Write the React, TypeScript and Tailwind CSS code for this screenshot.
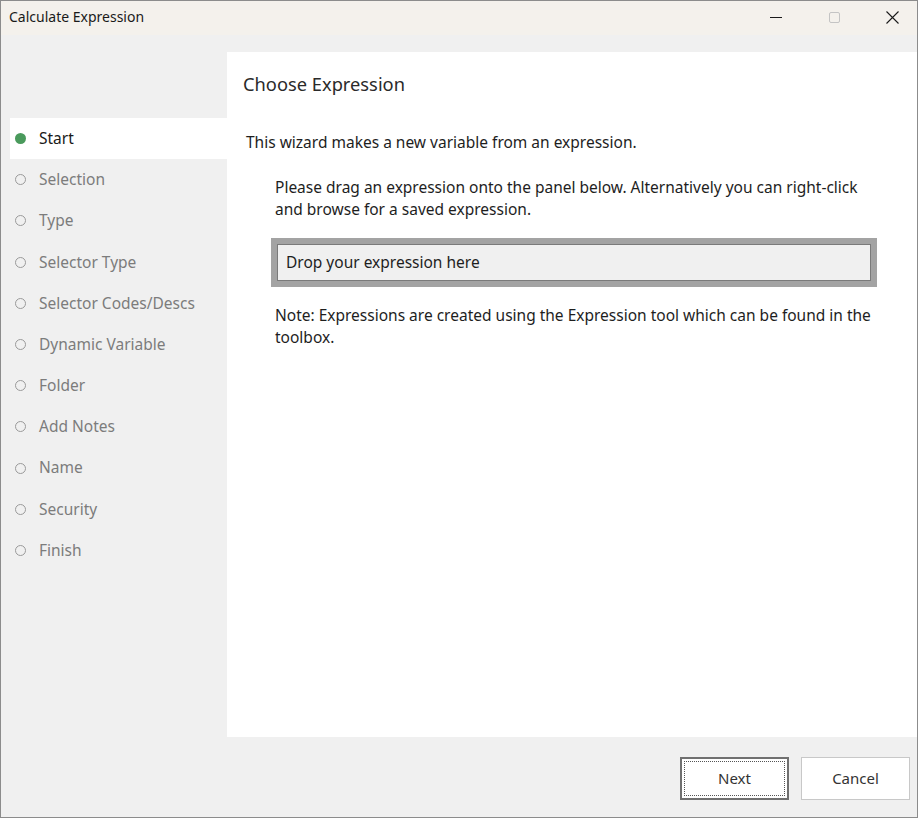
import React from 'react';

const steps = [
  'Start',
  'Selection',
  'Type',
  'Selector Type',
  'Selector Codes/Descs',
  'Dynamic Variable',
  'Folder',
  'Add Notes',
  'Name',
  'Security',
  'Finish',
];

function StepItem({ label, active }: { label: string; active: boolean }) {
  return (
    <div
      className={
        'flex items-center h-[41.2px] ml-[9px] ' + (active ? 'bg-white text-[#1a1a1a]' : 'text-[#7c7c7c]')
      }
    >
      {active ? (
        <span className="w-[11px] h-[11px] rounded-full bg-[#4a9a5c] ml-[5px]" />
      ) : (
        <span className="w-[11px] h-[11px] rounded-full border-[1.5px] border-[#9a9a9a] ml-[5px]" />
      )}
      <span className="ml-[13px] text-[15.5px]">{label}</span>
    </div>
  );
}

export default function App() {
  return (
    <div
      className="w-[918px] h-[818px] flex flex-col border border-[#8c8c8c] bg-[#f0f0f0] overflow-hidden text-[#1e1e1e]"
      style={{ fontFamily: '"Noto Sans", "Open Sans", sans-serif' }}
    >
      {/* title bar */}
      <div className="h-[34px] flex items-center bg-[#f4f1ec] shrink-0">
        <span className="ml-[8px] -mt-[4px] text-[14px] text-[#1a1a1a]">Calculate Expression</span>
        <div className="ml-auto flex items-center h-full pr-[2px]">
          <div className="w-[46px] h-full flex items-center justify-center -mt-[2px]">
            <span className="w-[12px] h-[1px] bg-[#1a1a1a]" />
          </div>
          <div className="w-[46px] h-full flex items-center justify-center ml-[12px] -mt-[2px]">
            <span className="w-[11px] h-[11px] border border-[#c4c4c4] rounded-[2px]" />
          </div>
          <div className="w-[46px] h-full flex items-center justify-center ml-[12px] -mt-[2px]">
            <svg width="13" height="13" viewBox="0 0 13 13">
              <path d="M0.5 0.5 L12.5 12.5 M12.5 0.5 L0.5 12.5" stroke="#1a1a1a" strokeWidth="1.1" />
            </svg>
          </div>
        </div>
      </div>

      <div className="flex flex-1 pt-[17px]">
        {/* sidebar */}
        <div className="w-[226px] shrink-0 pt-[66px]">
          {steps.map((s, i) => (
            <StepItem key={s} label={s} active={i === 0} />
          ))}
        </div>

        {/* content */}
        <div className="flex-1 flex flex-col">
          <div className="bg-white h-[685px] pl-[16px] pr-[40px]">
            <h1 className="mt-[18px] text-[18.3px] text-[#2a2a2a]">Choose Expression</h1>
            <p className="mt-[34px] ml-[3px] text-[15.5px]">This wizard makes a new variable from an expression.</p>
            <div className="ml-[32px] mt-[21px]">
              <p className="text-[15.5px] leading-[22px]">
                Please drag an expression onto the panel below. Alternatively you can right-click and browse for a
                saved expression.
              </p>
              <div className="mt-[18px] -ml-[4px] w-[606px] border-[6px] border-[#a3a3a3]">
                <div className="h-[37px] flex items-center bg-[#f0f0f0] border border-[#7a7a7a] pl-[8px] text-[15.5px]">
                  Drop your expression here
                </div>
              </div>
              <p className="mt-[17px] text-[15.5px] leading-[22px]">
                Note: Expressions are created using the Expression tool which can be found in the toolbox.
              </p>
            </div>
          </div>
          <div className="flex justify-end gap-[12px] pr-[7px] pt-[20px]">
            <button className="w-[109px] h-[43px] bg-white border-2 border-[#707070] p-[2px] text-[15px] text-[#333]">
              <span className="w-full h-full flex items-center justify-center border border-dotted border-[#555]">
                Next
              </span>
            </button>
            <button className="w-[109px] h-[43px] bg-white border border-[#c8c8c8] text-[15px] text-[#333]">
              Cancel
            </button>
          </div>
        </div>
      </div>
    </div>
  );
}
